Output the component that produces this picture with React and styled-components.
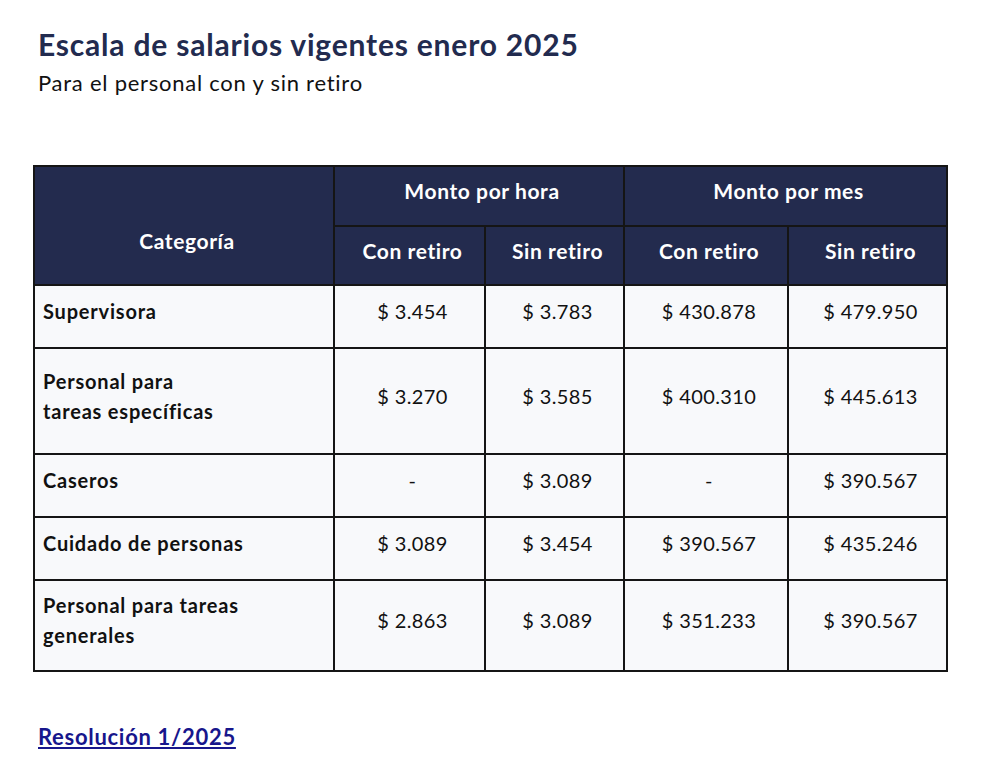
import React from 'react'
import styled, { createGlobalStyle } from 'styled-components'

const GlobalStyle = createGlobalStyle`
  body {
    margin: 0;
    background: #ffffff;
    font-family: Lato, "Open Sans", sans-serif;
  }
`

const rows = [
  { label: ['Supervisora'], values: ['$ 3.454', '$ 3.783', '$ 430.878', '$ 479.950'], h: 63 },
  { label: ['Personal para', 'tareas específicas'], values: ['$ 3.270', '$ 3.585', '$ 400.310', '$ 445.613'], h: 106 },
  { label: ['Caseros'], values: ['-', '$ 3.089', '-', '$ 390.567'], h: 63 },
  { label: ['Cuidado de personas'], values: ['$ 3.089', '$ 3.454', '$ 390.567', '$ 435.246'], h: 63 },
  { label: ['Personal para tareas', 'generales'], values: ['$ 2.863', '$ 3.089', '$ 351.233', '$ 390.567'], h: 91 },
]

function App() {
  return (
    <>
      <GlobalStyle />
      <Page>
        <Heading>
          <Title>Escala de salarios vigentes enero 2025</Title>
          <Subtitle>Para el personal con y sin retiro</Subtitle>
        </Heading>

        <Table>
          <colgroup>
            <col style={{ width: 300 }} />
            <col style={{ width: 151 }} />
            <col style={{ width: 139 }} />
            <col style={{ width: 164 }} />
            <col style={{ width: 159 }} />
          </colgroup>
          <thead>
            <HeadRow $h={60}>
              <HeadCell rowSpan={2} $lower>Categoría</HeadCell>
              <HeadCell colSpan={2}>Monto por hora</HeadCell>
              <HeadCell colSpan={2}>Monto por mes</HeadCell>
            </HeadRow>
            <HeadRow $h={59}>
              <HeadCell>Con retiro</HeadCell>
              <HeadCell>Sin retiro</HeadCell>
              <HeadCell>Con retiro</HeadCell>
              <HeadCell>Sin retiro</HeadCell>
            </HeadRow>
          </thead>
          <tbody>
            {rows.map((r) => (
              <BodyRow key={r.label.join(' ')} $h={r.h}>
                <LabelCell>
                  {r.label.map((l, i) => (
                    <React.Fragment key={l}>
                      {i > 0 && <br />}
                      {l}
                    </React.Fragment>
                  ))}
                </LabelCell>
                {r.values.map((v, i) => (
                  <ValueCell key={i}>{v}</ValueCell>
                ))}
              </BodyRow>
            ))}
          </tbody>
        </Table>

        <Footer>
          <Link href="#">Resolución 1/2025</Link>
        </Footer>
      </Page>
    </>
  )
}

const Page = styled.div`
  padding: 26px 33px 0;
  color: #111111;
`

const Heading = styled.header`
  padding: 0 5px;
`

const Title = styled.h1`
  margin: 0;
  font-size: 30px;
  line-height: 36px;
  letter-spacing: 0.8px;
  font-weight: 700;
  color: #222b4f;
`

const Subtitle = styled.p`
  margin: 8px 0 0;
  font-size: 22px;
  line-height: 26px;
  letter-spacing: 0.75px;
  color: #111111;
`

const Table = styled.table`
  margin-top: 69px;
  width: 915px;
  table-layout: fixed;
  border-collapse: separate;
  border-spacing: 0;
  border-top: 2px solid #151515;
  border-left: 2px solid #151515;
  font-size: 20px;
  line-height: 30px;
`

const HeadRow = styled.tr`
  height: ${(p) => p.$h}px;
  background: #232b4e;
`

const HeadCell = styled.th`
  padding: ${(p) => (p.$lower ? '30px 5px 0 11px' : '0 5px 10px 11px')};
  border-right: 2px solid #151515;
  border-bottom: 2px solid #151515;
  color: #ffffff;
  font-size: 21px;
  letter-spacing: 0.6px;
  font-weight: 700;
  text-align: center;
  vertical-align: middle;
`

const BodyRow = styled.tr`
  height: ${(p) => p.$h}px;
  background: #f8f9fb;
`

const LabelCell = styled.td`
  padding: 0 8px 11px;
  border-right: 2px solid #151515;
  border-bottom: 2px solid #151515;
  font-weight: 700;
  letter-spacing: 0.8px;
  vertical-align: middle;
`

const ValueCell = styled.td`
  padding: 0 5px 11px 11px;
  border-right: 2px solid #151515;
  border-bottom: 2px solid #151515;
  letter-spacing: 0.4px;
  text-align: center;
  vertical-align: middle;
`

const Footer = styled.div`
  margin-top: 51px;
  padding: 0 5px;
`

const Link = styled.a`
  font-size: 22px;
  line-height: 28px;
  letter-spacing: 0.7px;
  font-weight: 700;
  color: #17168c;
  text-decoration: underline;
`

export default App
